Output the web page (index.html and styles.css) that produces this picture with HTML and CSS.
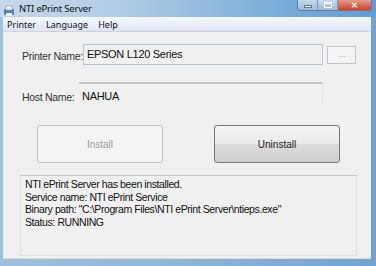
FILE: index.html
```html
<!DOCTYPE html>
<html lang="en">
<head>
  <meta charset="UTF-8">
  <title>NTI ePrint Server</title>
  <link rel="stylesheet" href="styles.css">
</head>
<body>
  <div class="window">
    <div class="titlebar">
      <div class="app-icon">
        <svg width="12" height="12" viewBox="0 0 12 12">
          <rect x="1" y="4" width="10" height="6" rx="1" fill="#5a7fb0"/>
          <rect x="3" y="1" width="6" height="4" fill="#ffffff" stroke="#8aa4c8" stroke-width="0.8"/>
          <rect x="3" y="8" width="6" height="3" fill="#e8eef6"/>
        </svg>
      </div>
      <span class="title-text">NTI ePrint Server</span>
      <div class="caption-btns">
        <div class="cap-btn cap-min"><span></span></div>
        <div class="cap-btn cap-max"><span></span></div>
        <div class="cap-btn cap-close">&#x2715;</div>
      </div>
    </div>

    <div class="frame">
      <div class="menubar">
        <span>Printer</span>
        <span>Language</span>
        <span>Help</span>
      </div>

      <div class="client">
        <div class="row row-printer">
          <label class="field-label">Printer Name:</label>
          <div class="textbox">EPSON L120 Series</div>
          <div class="browse-btn">...</div>
        </div>

        <div class="row row-host">
          <label class="field-label">Host Name:</label>
          <div class="textbox readonly">NAHUA</div>
        </div>

        <div class="btn-row">
          <div class="btn disabled">Install</div>
          <div class="btn">Uninstall</div>
        </div>

        <div class="log">
          <div>NTI ePrint Server has been installed.</div>
          <div>Service name: NTI ePrint Service</div>
          <div>Binary path: "C:\Program Files\NTI ePrint Server\ntieps.exe"</div>
          <div>Status: RUNNING</div>
        </div>
      </div>
    </div>
  </div>
</body>
</html>
```

FILE: styles.css
```css
* {
  box-sizing: border-box;
}
body {
  margin: 0;
  width: 376px;
  height: 266px;
  overflow: hidden;
  font-family: 'Liberation Sans', Arial, sans-serif;
}
.window {
  width: 376px;
  height: 266px;
  display: flex;
  flex-direction: column;
  background: linear-gradient(90deg, #9fc0e0 0%, #8ab6dc 50%, #6ea4d2 100%);
}
.titlebar {
  height: 17px;
  display: flex;
  align-items: flex-start;
  padding-left: 3px;
  background: linear-gradient(90deg, #c6d7ea 0%, #b3cde6 30%, #7fb0da 70%, #5f9ed3 100%);
}
.app-icon {
  width: 12px;
  height: 12px;
  margin-top: 3px;
}
.title-text {
  margin-left: 4px;
  margin-top: 2px;
  font-family: 'Noto Sans', sans-serif;
  font-size: 9.5px;
  color: #111;
  letter-spacing: -0.2px;
}
.caption-btns {
  margin-left: auto;
  margin-right: 4px;
  display: flex;
  height: 11px;
  border: 1px solid #5a7ea6;
  border-top: none;
  border-radius: 0 0 4px 4px;
  overflow: hidden;
}
.cap-btn {
  height: 100%;
  display: flex;
  align-items: center;
  justify-content: center;
}
.cap-min,
.cap-max {
  width: 20px;
  background: linear-gradient(#c6d9ec, #9dbbd9);
  border-right: 1px solid #7a9cc0;
}
.cap-min span {
  width: 8px;
  height: 3px;
  background: #fff;
  border: 1px solid #5a7493;
  margin-top: 3px;
}
.cap-max span {
  width: 8px;
  height: 6px;
  border: 1px solid #fff;
  border-top-width: 2px;
}
.cap-close {
  width: 33px;
  background: linear-gradient(#e39a88, #c8432d);
  color: #fff;
  font-size: 8px;
  font-weight: bold;
}
.frame {
  flex: 1;
  display: flex;
  flex-direction: column;
  padding: 0 5px 7px 3px;
}
.menubar {
  height: 15px;
  display: flex;
  align-items: center;
  gap: 10px;
  padding-left: 4px;
  background: linear-gradient(#f6f8fd, #dde5f3);
  border-bottom: 1px solid #c9d3e4;
  font-family: 'Noto Sans', sans-serif;
  font-size: 9px;
  color: #111;
}
.client {
  flex: 1;
  background: #f0f0f0;
  padding: 12px 14px 2px 17px;
  display: flex;
  flex-direction: column;
  border-bottom: 1px solid #dadada;
}
.row {
  display: flex;
  align-items: center;
}
.field-label {
  font-size: 10.5px;
  color: #333;
  letter-spacing: -0.3px;
  white-space: nowrap;
}
.row-printer .field-label {
  width: 63px;
  padding-left: 2px;
  margin-top: 3px;
}
.row-host {
  margin-top: 17px;
}
.row-host .field-label {
  width: 59px;
  padding-left: 2px;
  margin-top: 9px;
}
.textbox {
  width: 240px;
  height: 21px;
  padding: 2px 0 0 3px;
  border: 1px solid #b7c6d2;
  background: #f0f0f0;
  font-size: 11px;
  color: #111;
  letter-spacing: -0.3px;
  line-height: 15px;
  white-space: nowrap;
}
.textbox.readonly {
  width: 244px;
  border: none;
  border-top: 2px solid #c8c8c8;
  border-right: 1px solid #e4e4e4;
  padding-top: 5px;
}
.browse-btn {
  width: 29px;
  height: 18px;
  margin-left: 4px;
  margin-top: 1px;
  border: 1px solid #c6c6c6;
  background: #f4f4f4;
  font-size: 9px;
  color: #aaa;
  text-align: center;
  line-height: 14px;
}
.btn-row {
  display: flex;
  gap: 51px;
  padding-left: 17px;
  margin-top: 22px;
}
.btn {
  width: 126px;
  height: 38px;
  display: flex;
  align-items: center;
  justify-content: center;
  border: 1px solid #777;
  border-radius: 3px;
  background: linear-gradient(#f3f3f3 0%, #ebebeb 50%, #dcdcdc 51%, #cfcfcf 100%);
  font-size: 10px;
  color: #222;
}
.btn.disabled {
  border-color: #c4c4c4;
  background: #f4f4f4;
  color: #9a9a9a;
}
.log {
  margin-top: 12px;
  width: 337px;
  flex: 1;
  border-top: 1px solid #c9c9c9;
  border-left: 1px solid #e0e0e0;
  border-right: 1px solid #e0e0e0;
  border-bottom: 1px solid #e6e6e6;
  padding: 2px 0 0 4px;
  font-size: 10.5px;
  line-height: 12.5px;
  color: #111;
  letter-spacing: -0.4px;
}
```
